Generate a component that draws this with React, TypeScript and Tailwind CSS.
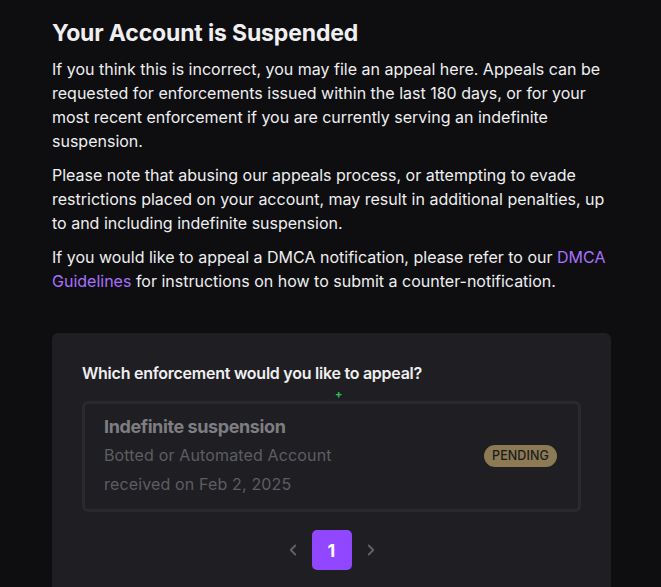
import { ChevronLeft, ChevronRight } from "lucide-react";

const font = { fontFamily: "Inter, 'Noto Sans', sans-serif" };

function EnforcementCard() {
  return (
    <div className="flex items-center justify-between rounded-md border-[3px] border-[#2a2a2e] px-[19px] pb-[10px] pt-[8px]">
      <div className="flex flex-col">
        <span className="text-[18px] font-bold leading-[29px] tracking-[-0.4px] text-[#7e7e82]">
          Indefinite suspension
        </span>
        <span className="text-[16px] leading-[29px] tracking-[0.15px] text-[#5d5d62]">
          Botted or Automated Account
        </span>
        <span className="text-[16px] leading-[29px] tracking-[0.15px] text-[#5d5d62]">
          received on Feb 2, 2025
        </span>
      </div>
      <span className="mr-[2px] mt-[1px] rounded-full bg-[#8b7a53] px-[8px] py-[2px] text-[12.5px] font-medium leading-[18px] tracking-[0.1px] text-[#1b1b1e]">
        PENDING
      </span>
    </div>
  );
}

function Pagination() {
  return (
    <div className="mt-[18px] flex items-center justify-center gap-[10px]">
      <ChevronLeft size={18} strokeWidth={2.5} className="text-[#606066]" />
      <button className="flex h-[40px] w-[40px] items-center justify-center rounded-[5px] bg-[#9147ff] text-[18px] font-bold text-white">
        1
      </button>
      <ChevronRight size={18} strokeWidth={2.5} className="text-[#606066]" />
    </div>
  );
}

export default function App() {
  return (
    <div className="min-h-[587px] bg-[#0e0e10] text-[#efeff1]" style={font}>
      <div className="ml-[52px] w-[560px] pt-[18px]">
        <h1 className="text-[23px] font-bold leading-[30px] tracking-[-0.15px]">
          Your Account is Suspended
        </h1>
        <div className="mt-[9px] flex flex-col gap-[10px] text-[16px] leading-[24px]">
          <p>
            If you think this is incorrect, you may file an appeal here. Appeals
            can be requested for enforcements issued within the last 180 days,
            or for your most recent enforcement if you are currently serving an
            indefinite suspension.
          </p>
          <p>
            Please note that abusing our appeals process, or attempting to
            evade restrictions placed on your account, may result in additional
            penalties, up to and including indefinite suspension.
          </p>
          <p>
            If you would like to appeal a DMCA notification, please refer to
            our <span className="text-[#a970ff]">DMCA Guidelines</span> for
            instructions on how to submit a counter-notification.
          </p>
        </div>
        <div className="relative mt-[40px] w-[559px] rounded-t-md bg-[#1f1f23] px-[30px] pb-[30px] pt-[28px]">
          <h2 className="text-[16px] font-semibold leading-[24px] tracking-[-0.25px]">
            Which enforcement would you like to appeal?
          </h2>
          <span className="absolute left-[283px] top-[56px] text-[11px] font-bold leading-none text-[#22c55e]">
            +
          </span>
          <div className="mt-[16px]">
            <EnforcementCard />
          </div>
          <Pagination />
        </div>
      </div>
    </div>
  );
}
